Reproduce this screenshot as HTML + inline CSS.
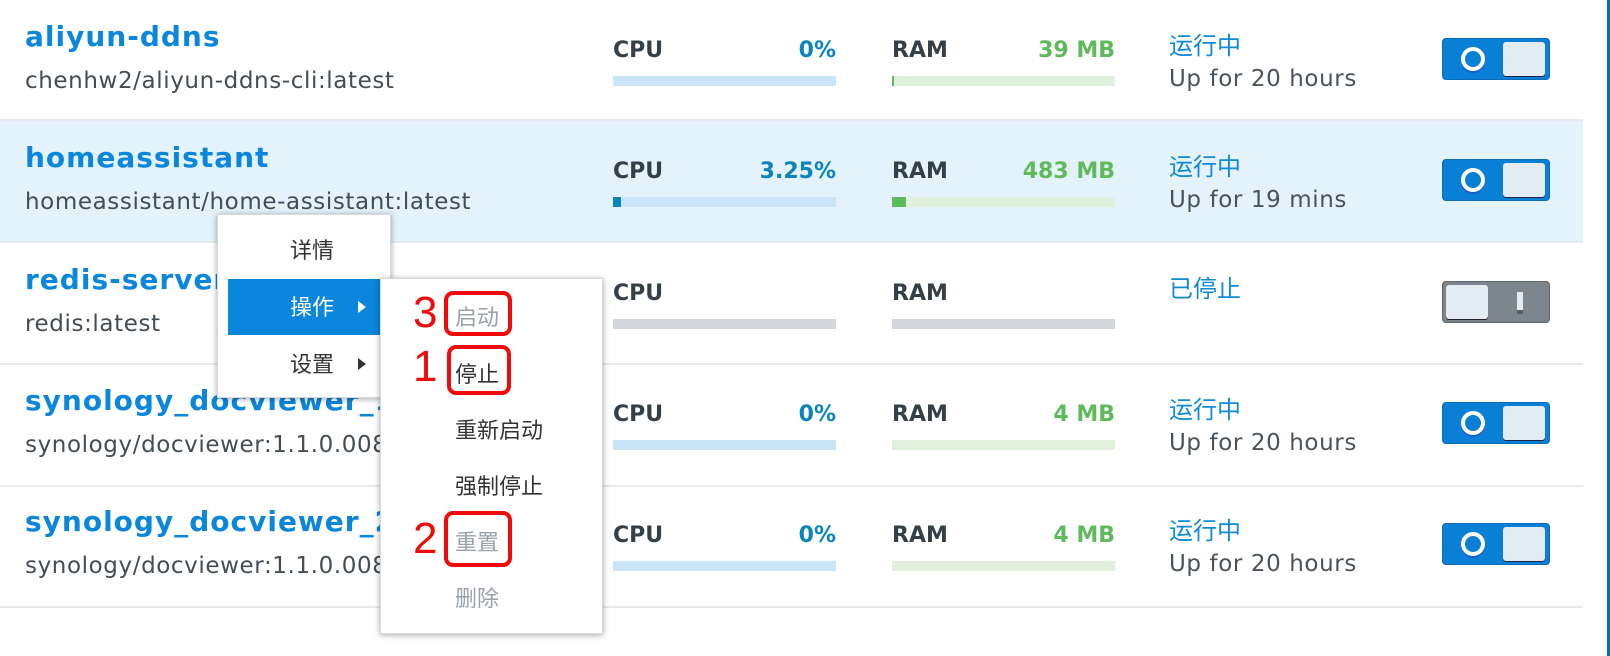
<!DOCTYPE html>
<html><head><meta charset="utf-8"><style>
*{margin:0;padding:0;box-sizing:border-box}
body{width:1610px;height:656px;background:#fff;position:relative;overflow:hidden;font-family:"DejaVu Sans","Noto Sans CJK SC",sans-serif}
.a{position:absolute;white-space:nowrap}
.row{position:absolute;left:0;width:1583px;height:122px;border-bottom:2px solid #e6eaee}
.hl{background:#e3f2fb}
.nm{left:25px;font-size:28px;letter-spacing:1px;font-weight:bold;color:#0a86dc;line-height:28px}
.im{left:25px;font-size:23px;letter-spacing:0.6px;color:#444c55;line-height:23px}
.lb{font-size:22px;font-weight:bold;color:#353f48;line-height:22px}
.cv{font-size:22px;font-weight:bold;color:#0a84bd;line-height:22px;text-align:right;width:223px}
.rv{font-size:22px;font-weight:bold;color:#5fba5c;line-height:22px;text-align:right;width:223px}
.bar{height:10px}
.st{left:1169px;font-size:24px;color:#118ad8;line-height:24px;font-family:"Noto Sans CJK SC",sans-serif}
.up{left:1169px;font-size:23px;letter-spacing:0.6px;color:#4a535c;line-height:23px}
.tg{left:1442px;width:108px;height:42px;border-radius:4px}
.on{background:#0a7fd6;border:1px solid #0a6cb8}
.on .k{position:absolute;right:4px;top:3px;width:42px;height:34px;background:#e3ebf3;border-radius:3px;box-shadow:0 1px 0 #224}
.on .c{position:absolute;left:18px;top:8px;width:24px;height:24px;border:4px solid #fff;border-radius:50%;box-shadow:0 2px 0 #1b5fcf}
.off{background:#7c858e;border:1px solid #5e666e}
.off .k{position:absolute;left:3px;top:3px;width:42px;height:34px;background:#e3ebf3;border-radius:3px;box-shadow:0 1px 0 #222}
.off .e{position:absolute;left:74px;top:10px;width:6px;height:22px;background:#e3ebf3;border-bottom:4px solid #56606b}
.menu{position:absolute;background:#fff;box-shadow:0 1px 6px rgba(0,0,0,.35);border:1px solid #d6dade}
.mi{position:absolute;font-family:"Noto Sans CJK SC",sans-serif;font-size:22px;line-height:22px;color:#333;white-space:nowrap}
.dis{color:#9aa1a8}
.rb{position:absolute;border:4px solid #f00a0a;border-radius:9px}
.rn{position:absolute;font-family:"Liberation Sans",sans-serif;font-size:44px;line-height:44px;color:#f00a0a}
.tri{position:absolute;width:0;height:0;border-top:6px solid transparent;border-bottom:6px solid transparent;border-left:8px solid #333}
</style></head><body>

<div class="row" style="top:0px;height:121px"></div>
<div class="row hl" style="top:121px"></div>
<div class="row" style="top:243px"></div>
<div class="row" style="top:365px"></div>
<div class="row" style="top:486px"></div>
<div style="position:absolute;left:1607px;top:0;width:3px;height:656px;background:#0a6cb8"></div>

<!-- row 0 -->
<div class="a nm" style="top:23px">aliyun-ddns</div>
<div class="a im" style="top:70px">chenhw2/aliyun-ddns-cli:latest</div>
<div class="a lb" style="left:613px;top:40px">CPU</div>
<div class="a cv" style="left:613px;top:40px">0%</div>
<div class="a bar" style="left:613px;top:76px;width:223px;background:#cae5f7"></div>
<div class="a lb" style="left:892px;top:40px">RAM</div>
<div class="a rv" style="left:892px;top:40px">39 MB</div>
<div class="a bar" style="left:892px;top:76px;width:223px;background:#e0f0dd"></div>
<div class="a bar" style="left:892px;top:76px;width:2px;background:#5fba5c"></div>
<div class="a st" style="top:32px">运行中</div>
<div class="a up" style="top:68px">Up for 20 hours</div>
<div class="a tg on" style="top:38px"><div class="c"></div><div class="k"></div></div>

<!-- row 1 -->
<div class="a nm" style="top:144px">homeassistant</div>
<div class="a im" style="top:191px">homeassistant/home-assistant:latest</div>
<div class="a lb" style="left:613px;top:161px">CPU</div>
<div class="a cv" style="left:613px;top:161px">3.25%</div>
<div class="a bar" style="left:613px;top:197px;width:223px;background:#cae5f7"></div>
<div class="a bar" style="left:613px;top:197px;width:8px;background:#0a84bd"></div>
<div class="a lb" style="left:892px;top:161px">RAM</div>
<div class="a rv" style="left:892px;top:161px">483 MB</div>
<div class="a bar" style="left:892px;top:197px;width:223px;background:#e0f0dd"></div>
<div class="a bar" style="left:892px;top:197px;width:14px;background:#5fba5c"></div>
<div class="a st" style="top:153px">运行中</div>
<div class="a up" style="top:189px">Up for 19 mins</div>
<div class="a tg on" style="top:159px"><div class="c"></div><div class="k"></div></div>

<!-- row 2 -->
<div class="a nm" style="top:266px">redis-server</div>
<div class="a im" style="top:313px">redis:latest</div>
<div class="a lb" style="left:613px;top:283px">CPU</div>
<div class="a bar" style="left:613px;top:319px;width:223px;background:#d3d7db"></div>
<div class="a lb" style="left:892px;top:283px">RAM</div>
<div class="a bar" style="left:892px;top:319px;width:223px;background:#d3d7db"></div>
<div class="a st" style="top:275px">已停止</div>
<div class="a tg off" style="top:281px"><div class="k"></div><div class="e"></div></div>

<!-- row 3 -->
<div class="a nm" style="top:387px">synology_docviewer_1</div>
<div class="a im" style="top:434px">synology/docviewer:1.1.0.0086</div>
<div class="a lb" style="left:613px;top:404px">CPU</div>
<div class="a cv" style="left:613px;top:404px">0%</div>
<div class="a bar" style="left:613px;top:440px;width:223px;background:#cae5f7"></div>
<div class="a lb" style="left:892px;top:404px">RAM</div>
<div class="a rv" style="left:892px;top:404px">4 MB</div>
<div class="a bar" style="left:892px;top:440px;width:223px;background:#e0f0dd"></div>
<div class="a st" style="top:396px">运行中</div>
<div class="a up" style="top:432px">Up for 20 hours</div>
<div class="a tg on" style="top:402px"><div class="c"></div><div class="k"></div></div>

<!-- row 4 -->
<div class="a nm" style="top:508px">synology_docviewer_2</div>
<div class="a im" style="top:555px">synology/docviewer:1.1.0.0086</div>
<div class="a lb" style="left:613px;top:525px">CPU</div>
<div class="a cv" style="left:613px;top:525px">0%</div>
<div class="a bar" style="left:613px;top:561px;width:223px;background:#cae5f7"></div>
<div class="a lb" style="left:892px;top:525px">RAM</div>
<div class="a rv" style="left:892px;top:525px">4 MB</div>
<div class="a bar" style="left:892px;top:561px;width:223px;background:#e0f0dd"></div>
<div class="a st" style="top:517px">运行中</div>
<div class="a up" style="top:553px">Up for 20 hours</div>
<div class="a tg on" style="top:523px"><div class="c"></div><div class="k"></div></div>

<!-- menu 1 -->
<div class="menu" style="left:217px;top:214px;width:174px;height:184px">
  <div class="mi" style="left:72px;top:23px">详情</div>
  <div style="position:absolute;left:10px;top:64px;width:164px;height:56px;background:#0a86dc"></div>
  <div class="mi" style="left:72px;top:80px;color:#fff">操作</div>
  <div class="tri" style="left:140px;top:86px;border-left-color:#fff"></div>
  <div class="mi" style="left:72px;top:137px">设置</div>
  <div class="tri" style="left:140px;top:143px"></div>
</div>

<!-- menu 2 -->
<div class="menu" style="left:380px;top:278px;width:223px;height:356px">
  <div class="mi dis" style="left:74px;top:26px">启动</div>
  <div class="mi" style="left:74px;top:83px">停止</div>
  <div class="mi" style="left:74px;top:139px">重新启动</div>
  <div class="mi" style="left:74px;top:195px">强制停止</div>
  <div class="mi dis" style="left:74px;top:251px">重置</div>
  <div class="mi dis" style="left:74px;top:307px">删除</div>
</div>

<div class="rb" style="left:444px;top:291px;width:68px;height:45px"></div>
<div class="rb" style="left:447px;top:345px;width:64px;height:50px"></div>
<div class="rb" style="left:444px;top:511px;width:68px;height:56px"></div>
<div class="rn" style="left:413px;top:291px">3</div>
<div class="rn" style="left:413px;top:345px">1</div>
<div class="rn" style="left:413px;top:517px">2</div>

</body></html>
